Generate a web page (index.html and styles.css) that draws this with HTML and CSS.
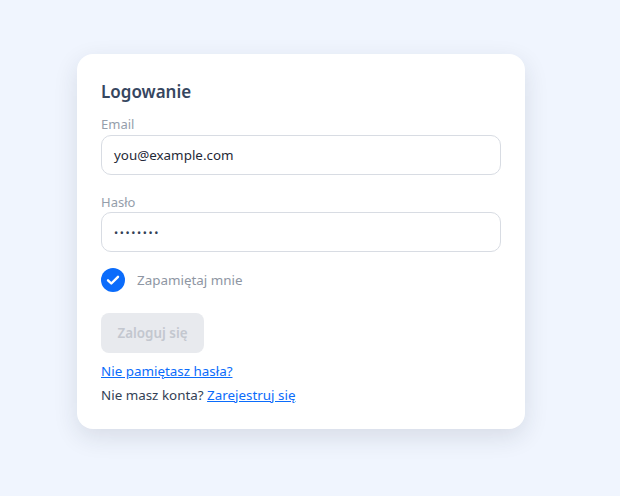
FILE: index.html
```html
<!DOCTYPE html>
<html lang="pl">
<head>
<meta charset="utf-8">
<link rel="stylesheet" href="styles.css">
</head>
<body>
<main class="page">
  <form class="card">
    <h1 class="title">Logowanie</h1>
    <label class="label" for="email">Email</label>
    <div class="input" id="email">you@example.com</div>
    <label class="label label-gap" for="pass">Hasło</label>
    <div class="input input-pass" id="pass">••••••••</div>
    <div class="remember">
      <span class="check">
        <svg width="24" height="24" viewBox="0 0 24 24"><circle cx="12" cy="12" r="12" fill="#0b6cfb"/><path d="M7 12.3l3.3 3.2L17 8.8" fill="none" stroke="#fff" stroke-width="2.4" stroke-linecap="round" stroke-linejoin="round"/></svg>
      </span>
      <span class="remember-text">Zapamiętaj mnie</span>
    </div>
    <button type="button" class="btn" disabled>Zaloguj się</button>
    <a class="link forgot" href="#">Nie pamiętasz hasła?</a>
    <p class="signup">Nie masz konta? <a class="link" href="#">Zarejestruj się</a></p>
  </form>
</main>
</body>
</html>
```

FILE: styles.css
```css
html, body {
  margin: 0;
  padding: 0;
}
body {
  background: #f0f5fe;
  font-family: "Noto Sans", "Open Sans", sans-serif;
  width: 620px;
  height: 496px;
}
.page {
  padding: 54px 0 0 77px;
}
.card {
  width: 448px;
  box-sizing: border-box;
  background: #fff;
  border-radius: 16px;
  padding: 26px 24px 25px;
  box-shadow: 0 8px 24px rgba(30, 41, 59, 0.12);
  display: flex;
  flex-direction: column;
}
.title {
  margin: 0 0 12px;
  font-size: 17px;
  line-height: 24px;
  font-weight: 600;
  color: #36465f;
}
.label {
  font-size: 13px;
  line-height: 16px;
  color: #959eab;
  margin-bottom: 3px;
}
.label-gap {
  margin-top: 19px;
  margin-bottom: 2px;
}
.input {
  height: 40px;
  box-sizing: border-box;
  border: 1px solid #d8dce3;
  border-radius: 10px;
  padding: 0 12px;
  display: flex;
  align-items: center;
  font-size: 13.4px;
  color: #1f2937;
}
.input-pass {
  font-size: 11px;
  letter-spacing: 1.6px;
  color: #334155;
}
.remember {
  margin-top: 16px;
  height: 24px;
  display: flex;
  align-items: center;
  gap: 12px;
}
.check {
  width: 24px;
  height: 24px;
  display: flex;
}
.remember-text {
  font-size: 13.4px;
  color: #8e96a3;
}
.btn {
  margin-top: 21px;
  align-self: flex-start;
  width: 103px;
  height: 40px;
  border: none;
  border-radius: 8px;
  background: #e8eaee;
  color: #c3c7cf;
  font-family: inherit;
  font-size: 13.4px;
  font-weight: 600;
  padding: 0;
}
.link {
  color: #0b6cfb;
  text-decoration: underline;
  font-size: 13.4px;
}
.forgot {
  margin-top: 9px;
  line-height: 18px;
  align-self: flex-start;
}
.signup {
  margin: 6px 0 0;
  font-size: 13.4px;
  line-height: 18px;
  color: #334155;
}
```
